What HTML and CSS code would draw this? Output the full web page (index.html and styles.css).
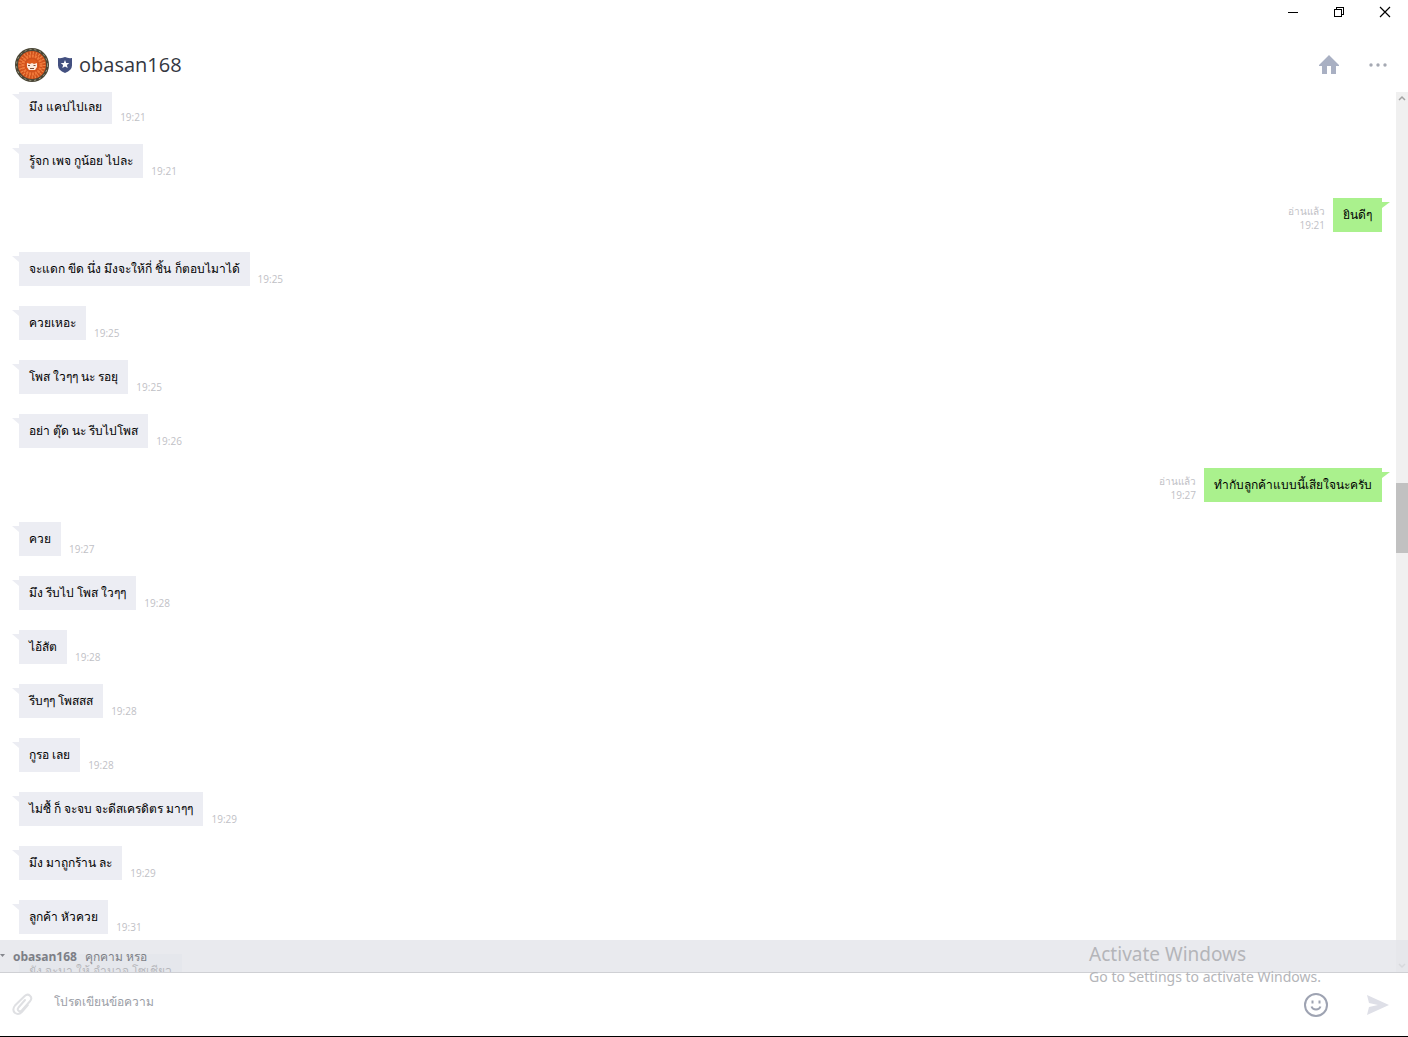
FILE: index.html
```html
<!DOCTYPE html>
<html lang="th">
<head>
	<meta charset="utf-8">
	<title>obasan168</title>
	<link rel="stylesheet" href="styles.css">
</head>
<body>
<div class="window">
	<div class="titlebar">
		<button class="winbtn" aria-label="Minimize">
			<svg width="12" height="12" shape-rendering="crispEdges"><path d="M1 6.5h10" stroke="#000" fill="none"/></svg>
		</button>
		<button class="winbtn" aria-label="Restore">
			<svg width="12" height="12" shape-rendering="crispEdges"><path d="M1.5 3.5h7v7h-7zM3.5 3V1.5h7v7H9" stroke="#000" fill="none"/></svg>
		</button>
		<button class="winbtn" aria-label="Close">
			<svg width="12" height="12"><path d="M1 1l10 10M11 1L1 11" stroke="#000" stroke-width="1.2" fill="none"/></svg>
		</button>
	</div>

	<header class="header">
		<svg class="avatar" width="34" height="34" viewBox="0 0 34 34">
			<circle cx="17" cy="17" r="17" fill="#4a4636"/>
			<circle cx="17" cy="17" r="15.5" fill="none" stroke="#a3a088" stroke-dasharray="2 3"/>
			<circle cx="17" cy="17" r="14" fill="#d0511c"/>
			<circle cx="17" cy="17" r="12" fill="none" stroke="#ee8a4a" stroke-width="3" stroke-dasharray="1 2"/>
			<circle cx="17" cy="17" r="9" fill="none" stroke="#f0793a" stroke-width="3" stroke-dasharray="2 1"/>
			<circle cx="17" cy="17" r="6" fill="#dd5a1e"/>
			<path d="M12 15l3 1 2-1 2 1 3-1v4l-2 3h-6l-2-3z" fill="#fbe9dd"/>
			<path d="M13 17.5h2M18.5 17.5h2M15 20.5h4" stroke="#5a2412" stroke-width=".8"/>
		</svg>
		<svg class="badge" width="14" height="16" viewBox="0 0 14 16">
			<path d="M0 1Q4 1.5 7 0q3 1.5 7 1v7.500q0 4.500-7 7.500Q0 13 0 8.500z" fill="#435080"/>
			<path d="M7 3l1.200 2.900 3.100.2-2.400 2 .8 3L7 9.400l-2.700 1.700.8-3-2.400-2 3.100-.2z" fill="#fff"/>
		</svg>
		<h1 class="name">obasan168</h1>
		<button class="iconbtn" aria-label="Home">
			<svg width="20" height="20" viewBox="0 0 20 20"><path d="M10 0l10 10v1h-3v8h-5v-8H8v8H3v-8H0v-1z" fill="#a9b0c3"/></svg>
		</button>
		<button class="iconbtn" aria-label="More">
			<svg width="18" height="4" viewBox="0 0 18 4" fill="#a5a9b3"><circle cx="2" cy="2" r="1.7"/><circle cx="9" cy="2" r="1.7"/><circle cx="16" cy="2" r="1.7"/></svg>
		</button>
	</header>

	<main class="chat">
		<div class="messages">
			<div class="msg"><p class="bubble">มึง แคปไปเลย</p><span class="meta">19:21</span></div>
			<div class="msg"><p class="bubble">รู้จก เพจ กูน้อย ไปละ</p><span class="meta">19:21</span></div>
			<div class="msg mine"><p class="bubble">ยินดีๆ</p><span class="meta">อ่านแล้ว<br>19:21</span></div>
			<div class="msg"><p class="bubble">จะแดก ขีด นึ่ง มึงจะให้กี่ ชิ้น ก็ตอบไมาได้</p><span class="meta">19:25</span></div>
			<div class="msg"><p class="bubble">ควยเหอะ</p><span class="meta">19:25</span></div>
			<div class="msg"><p class="bubble">โพส ใวๆๆ นะ รอยุ</p><span class="meta">19:25</span></div>
			<div class="msg"><p class="bubble">อย่า ตุ๊ด นะ รีบไปโพส</p><span class="meta">19:26</span></div>
			<div class="msg mine"><p class="bubble">ทำกับลูกค้าแบบนี้เสียใจนะครับ</p><span class="meta">อ่านแล้ว<br>19:27</span></div>
			<div class="msg"><p class="bubble">ควย</p><span class="meta">19:27</span></div>
			<div class="msg"><p class="bubble">มึง รีบไป โพส ใวๆๆ</p><span class="meta">19:28</span></div>
			<div class="msg"><p class="bubble">ไอ้สัต</p><span class="meta">19:28</span></div>
			<div class="msg"><p class="bubble">รีบๆๆ โพสสส</p><span class="meta">19:28</span></div>
			<div class="msg"><p class="bubble">กูรอ เลย</p><span class="meta">19:28</span></div>
			<div class="msg"><p class="bubble">ไม่ซื้ ก็ จะจบ จะดีสเครดิตร มาๆๆ</p><span class="meta">19:29</span></div>
			<div class="msg"><p class="bubble">มึง มาถูกร้าน ละ</p><span class="meta">19:29</span></div>
			<div class="msg"><p class="bubble">ลูกค้า หัวควย</p><span class="meta">19:31</span></div>
			<div class="msg"><p class="bubble">ยัง จะมา ให้ อำนาจ โซเชียว</p></div>
		</div>
		<div class="scrollbar">
			<button class="arrow" aria-label="Scroll up"><svg width="8" height="6"><path d="M1 5l3-3 3 3" stroke="#a3a3a3" stroke-width="1.5" fill="none"/></svg></button>
			<div class="track"><div class="thumb"></div></div>
			<button class="arrow" aria-label="Scroll down"><svg width="8" height="6"><path d="M1 1l3 3 3-3" stroke="#a3a3a3" stroke-width="1.5" fill="none"/></svg></button>
		</div>
		<div class="preview">
			<svg width="5" height="4"><path d="M0 0h5L2.5 3z" fill="#85878d"/></svg>
			<b class="sender">obasan168</b>
			<span>คุกคาม หรอ</span>
		</div>
	</main>

	<footer class="composer">
		<button class="iconbtn" aria-label="Attach file">
			<svg width="22" height="24" viewBox="0 0 22 24"><path d="M13 7l-6.500 7.500q-1.500 2 0 3.300t3.300-.3l8.400-9.500q2.300-3-.2-5.300t-5.300.3L3 12.500q-3.200 4-.2 7.200 3.600 2.800 7-.7l6-6.800" stroke="#dfe0e3" stroke-width="2" fill="none" stroke-linecap="round"/></svg>
		</button>
		<input class="message-input" type="text" placeholder="โปรดเขียนข้อความ" aria-label="โปรดเขียนข้อความ">
		<button class="iconbtn" aria-label="Emoji">
			<svg width="24" height="24" viewBox="0 0 24 24" fill="none" stroke="#9ea3b2" stroke-width="2"><circle cx="12" cy="12" r="11"/><path d="M8.500 7.500v3M15.500 7.500v3M7.500 13.500q1 3 4.500 3t4.500-3"/></svg>
		</button>
		<button class="iconbtn" aria-label="Send">
			<svg width="22" height="20" viewBox="0 0 22 20"><path d="M0 0l22 10L0 20l2-8 9-2-9-2z" fill="#dedfe7"/></svg>
		</button>
	</footer>

	<div class="watermark">
		<div class="wm-title">Activate Windows</div>
		<div>Go to Settings to activate Windows.</div>
	</div>
</div>
</body>
</html>
```
FILE: styles.css
```css
* {
	box-sizing: border-box;
}
body {
	margin: 0;
	background: #fff;
	color: #000;
	font-family: "Open Sans", "Noto Sans", sans-serif;
	font-size: 12px;
}
button {
	display: flex;
	align-items: center;
	justify-content: center;
	padding: 0;
	border: 0;
	background: none;
}
.window {
	position: relative;
	display: flex;
	flex-direction: column;
	height: 100vh;
	border-bottom: 1px solid #000;
}

/* Title bar and header */
.titlebar {
	display: flex;
	justify-content: flex-end;
	height: 37px;
}
.winbtn {
	width: 46px;
	height: 24px;
}
.header {
	display: flex;
	align-items: center;
	height: 55px;
	padding: 0 19px 0 15px;
}
.badge {
	margin: 0 7px 0 9px;
}
.name {
	flex: 1;
	margin: 0;
	font-size: 20px;
	font-weight: 400;
	line-height: 28px;
	color: #34373f;
}
.header .iconbtn {
	width: 22px;
	height: 24px;
	margin-left: 27px;
}

/* Chat area */
.chat {
	position: relative;
	flex: 1;
	display: flex;
	min-height: 0;
	border-bottom: 1px solid #cfd0d4;
	overflow: hidden;
}
.messages {
	flex: 1;
	display: flex;
	flex-direction: column;
	gap: 20px;
	margin-top: -2px;
	padding: 0 14px 0 19px;
}
.msg {
	flex: none;
	display: flex;
	align-items: flex-end;
	gap: 8px;
	height: 34px;
}
.mine {
	flex-direction: row-reverse;
}
.bubble {
	position: relative;
	margin: 0;
	padding: 8px 10px;
	height: 34px;
	line-height: 18px;
	white-space: nowrap;
	background: #ecedf3;
}
.bubble::before {
	content: "";
	position: absolute;
	top: 4px;
	left: -7px;
	width: 7px;
	height: 6px;
	background: inherit;
	clip-path: polygon(0 0, 100% 0, 100% 100%);
}
.mine .bubble {
	background: #aaf18d;
}
.mine .bubble::before {
	left: auto;
	right: -8px;
	width: 8px;
	clip-path: polygon(0 0, 100% 0, 0 100%);
}
.meta {
	font-size: 10px;
	line-height: 14px;
	color: #bfc1c6;
}
.mine .meta {
	text-align: right;
}

.scrollbar {
	display: flex;
	flex-direction: column;
	width: 12px;
	background: #f0f0f0;
}
.arrow {
	height: 12px;
}
.track {
	flex: 1;
	display: flex;
	flex-direction: column;
}
.track::before {
	content: "";
	flex: 379 0 0;
}
.track::after {
	content: "";
	flex: 407 0 0;
}
.thumb {
	height: 70px;
	background: #c1c1c1;
}

.preview {
	position: absolute;
	left: 0;
	right: 0;
	bottom: 0;
	display: flex;
	align-items: center;
	gap: 8px;
	height: 32px;
	background: rgba(228, 229, 234, 0.8);
	color: #7d7f86;
}

/* Message box */
.composer {
	display: flex;
	align-items: center;
	height: 63px;
	padding: 0 19px 0 12px;
}
.message-input {
	flex: 1;
	min-width: 0;
	margin: 0 20px;
	padding: 0 0 6px;
	border: 0;
	outline: 0;
	background: none;
	font: inherit;
}
.message-input::placeholder {
	color: #9b9ea6;
	opacity: 1;
}
.composer .iconbtn + .iconbtn {
	margin-left: 39px;
}

.watermark {
	position: absolute;
	right: 87px;
	bottom: 49px;
	font-family: "Noto Sans", sans-serif;
	font-size: 14px;
	line-height: 20px;
	color: #b4b5b9;
	pointer-events: none;
}
.wm-title {
	font-size: 19px;
	line-height: 25px;
}
```
